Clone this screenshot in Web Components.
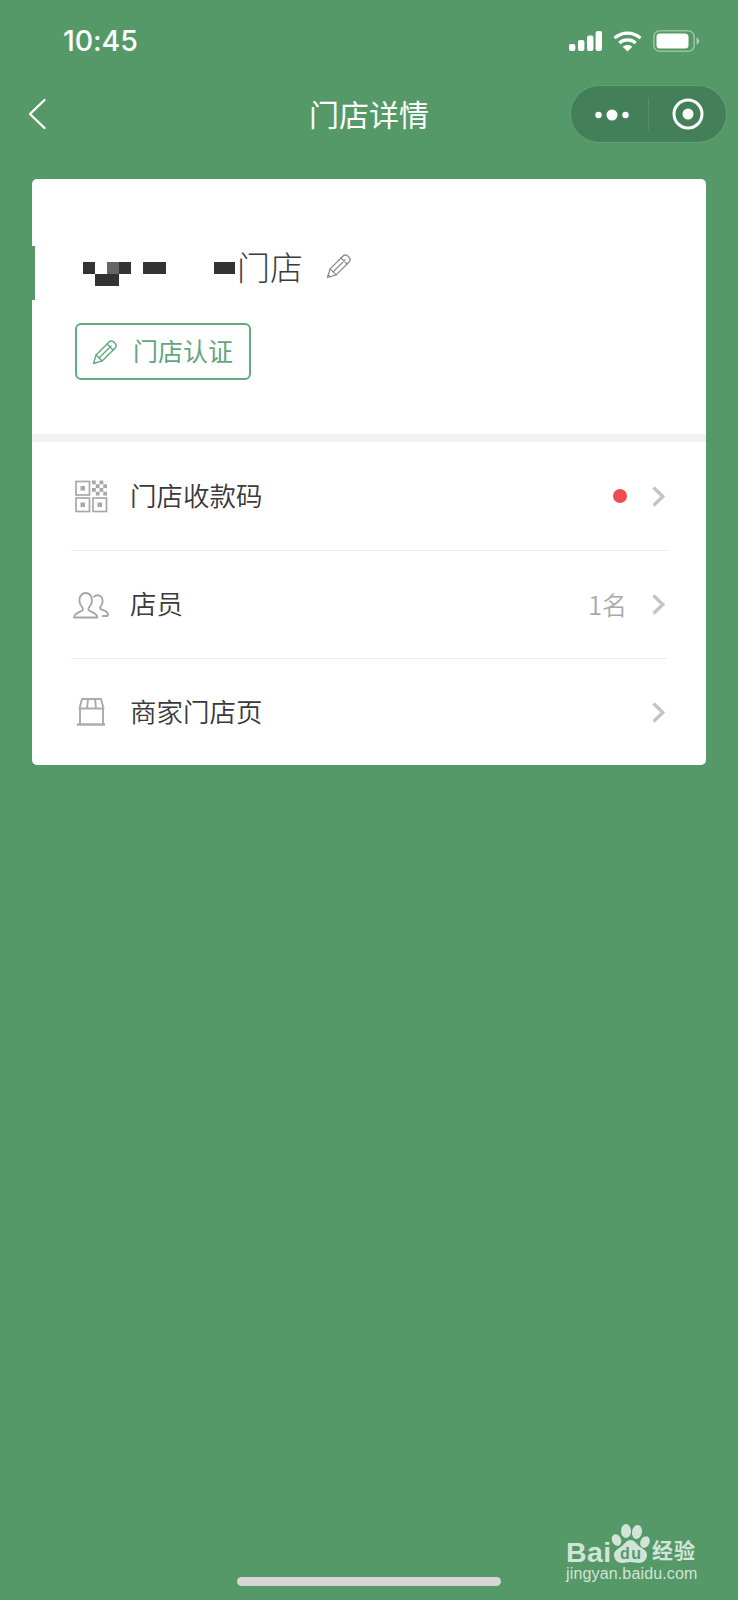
<!DOCTYPE html>
<html lang="zh">
<head>
<meta charset="utf-8">
<title>门店详情</title>
<style>
html,body{margin:0;padding:0;background:#549967;}
body{font-family:"Noto Sans CJK SC","Liberation Sans",sans-serif;}
</style>
</head>
<body>
<x-app>
  <x-status-bar slot="top" time="10:45"></x-status-bar>
  <x-nav-bar slot="top" title="门店详情"></x-nav-bar>
  <x-store-card>
    <x-store-head name="门店" action="门店认证"></x-store-head>
    <x-menu-row first>
      <svg slot="icon" width="40" height="34" viewBox="0 0 40 34" fill="none" stroke="#a8a8a8" stroke-width="1.7">
        <rect x="5" y="2.500" width="13.500" height="13.500"/><rect x="9.500" y="7" width="4.500" height="4.500" fill="#a8a8a8" stroke="none"/>
        <rect x="5" y="19" width="13.500" height="13.500"/><rect x="9.500" y="23.500" width="4.500" height="4.500" fill="#a8a8a8" stroke="none"/>
        <rect x="22" y="19" width="13.500" height="13.500"/><rect x="26.500" y="23.500" width="4.500" height="4.500" fill="#a8a8a8" stroke="none"/>
        <g fill="#a8a8a8" stroke="none"><rect x="21" y="1.500" width="3.800" height="3.800"/><rect x="28.500" y="1.500" width="3.800" height="3.800"/><rect x="24.800" y="5.300" width="3.800" height="3.800"/><rect x="32.200" y="5.300" width="3.800" height="3.800"/><rect x="21" y="9" width="3.800" height="3.800"/><rect x="28.500" y="9" width="3.800" height="3.800"/><rect x="24.800" y="12.800" width="3.800" height="3.800"/><rect x="32.200" y="12.800" width="3.800" height="3.800"/></g>
      </svg>
      门店收款码
      <x-red-dot slot="trail"></x-red-dot>
    </x-menu-row>
    <x-menu-row>
      <svg slot="icon" width="40" height="34" viewBox="0 0 40 34" fill="none" stroke="#a6a6a6" stroke-width="1.900" stroke-linejoin="round" stroke-linecap="round">
        <path d="M3 29.500c0-4.200 5.500-5.200 8.300-7 1-.7.800-2.200-.2-3.300-1.700-1.800-2.700-4.400-2.700-6.900 0-4 2.500-7.300 6.300-7.300s6.300 3.300 6.300 7.300c0 2.500-1 5.100-2.700 6.900-1 1.100-1.200 2.600-.2 3.300 2.800 1.800 8.300 2.800 8.300 7z"/>
        <path d="M23 8.500c1-.9 2.200-1.300 3.500-1.300 3.200 0 5.200 2.500 5.200 5.700 0 2.100-.7 4-2 5.400-.8.900-.8 2.200 0 2.800 2.300 1.400 7.300 2 7.300 5.300 0 .9-.8 1.600-1.800 1.600h-3.500"/>
      </svg>
      店员
      <x-muted-text slot="trail">1名</x-muted-text>
    </x-menu-row>
    <x-menu-row last>
      <svg slot="icon" width="40" height="34" viewBox="0 0 40 34" fill="none" stroke="#acacac" stroke-width="2" stroke-linejoin="round">
        <path d="M11 4h19l2.500 9.500h-24z"/>
        <path d="M17 4l-1 9.500M24 4l1 9.500"/>
        <path d="M9 13.500V29M32 13.500V29"/>
        <path d="M6 29.500h28" stroke-width="2.600"/>
      </svg>
      商家门店页
    </x-menu-row>
  </x-store-card>
  <x-baidu-mark slot="over"></x-baidu-mark>
  <x-home-bar slot="over"></x-home-bar>
</x-app>

<script>
function define(name, css, html, init){
  customElements.define(name, class extends HTMLElement{
    constructor(){
      super();
      const r=this.attachShadow({mode:'open'});
      r.innerHTML='<style>'+css+'</style>'+html;
    }
    connectedCallback(){ if(init) init(this, this.shadowRoot); }
  });
}

define('x-app',
 `:host{display:flex;flex-direction:column;position:relative;width:738px;height:1600px;overflow:hidden;background:#549967;}
  .main{display:block;padding:33px 32px 0;}`,
 `<slot name="top"></slot><div class="main"><slot></slot></div><slot name="over"></slot>`);

define('x-status-bar',
 `:host{display:flex;align-items:center;height:82px;box-sizing:border-box;padding:0 38px 0 63px;color:#fff;}
  .t{font:500 28.500px/1 Inter,"Liberation Sans",sans-serif;letter-spacing:-.1px;}
  .r{margin-left:auto;display:flex;align-items:center;gap:11px;}
  svg{display:block}`,
 `<span class="t"></span>
  <div class="r">
   <svg width="33" height="20" viewBox="0 0 33 20" fill="#fff"><rect x="0" y="13" width="6.400" height="7" rx="2"/><rect x="9" y="9" width="6.400" height="11" rx="2"/><rect x="18" y="4.500" width="6.400" height="15.500" rx="2"/><rect x="26.600" y="0" width="6.400" height="20" rx="2"/></svg>
   <svg width="29" height="21" viewBox="0 0 29 21" fill="none" stroke="#fff" stroke-width="3.200"><path d="M1.500 7.200C8.800.4 20.200.4 27.500 7.200"/><path d="M6.300 12c4.500-4.100 11.900-4.100 16.400 0"/><path d="M14.500 20.500l-4.800-4.800c2.700-2.300 6.900-2.300 9.600 0z" fill="#fff" stroke="none"/></svg>
   <svg width="47" height="22" viewBox="0 0 47 22" fill="none"><rect x=".8" y=".8" width="40.400" height="20.400" rx="6" stroke="#fff" stroke-opacity=".4" stroke-width="1.600"/><rect x="3.500" y="3.500" width="32" height="15" rx="3.500" fill="#fff"/><path d="M43.500 7.500c2 .6 2.800 2 2.800 3.500s-.8 2.900-2.800 3.500z" fill="#fff" fill-opacity=".5"/></svg>
  </div>`,
 (h,r)=>{r.querySelector('.t').textContent=h.getAttribute('time');});

define('x-nav-bar',
 `:host{display:grid;grid-template-columns:1fr auto 1fr;align-items:center;height:64px;box-sizing:border-box;padding:0 12px;color:#fff;}
  .back{display:block;margin-left:16px;}
  .t{font:400 30px/1 "Noto Sans CJK SC",sans-serif;margin-top:-2px;}
  .cap{justify-self:end;display:flex;align-items:center;width:155px;height:56px;border-radius:28px;background:#437f58;box-shadow:0 0 0 1px rgba(255,255,255,.07);}
  .cell{flex:1;display:flex;align-items:center;justify-content:center;height:100%;}
  .more{margin-left:4px;margin-top:1px;}
  .sep{width:1px;height:32px;background:rgba(255,255,255,.12);}
  svg{display:block}`,
 `<svg class="back" width="20" height="32" viewBox="0 0 20 32" fill="none" stroke="#fff" stroke-width="2.400" stroke-linecap="round" stroke-linejoin="round"><path d="M16.500 2L2 16l14.500 14"/></svg>
  <span class="t"></span>
  <div class="cap">
    <div class="cell"><svg class="more" width="36" height="14" viewBox="0 0 36 14" fill="#fff"><circle cx="4.500" cy="7" r="3.200"/><circle cx="18" cy="7" r="5.500"/><circle cx="31.500" cy="7" r="3.200"/></svg></div>
    <div class="sep"></div>
    <div class="cell"><svg width="32" height="32" viewBox="0 0 32 32" fill="none"><circle cx="16" cy="16" r="14" stroke="#fff" stroke-width="3"/><circle cx="16" cy="16" r="5.500" fill="#fff"/></svg></div>
  </div>`,
 (h,r)=>{r.querySelector('.t').textContent=h.getAttribute('title');});

define('x-store-card',
 `:host{display:block;position:relative;background:#fff;border-radius:5px;overflow:hidden;}
  .mark{position:absolute;left:0;top:67px;width:3px;height:54px;background:#549967;}`,
 `<slot></slot><div class="mark"></div>`);

define('x-store-head',
 `:host{display:block;box-sizing:border-box;height:263px;padding:63px 0 0 0;border-bottom:8px solid #f2f2f2;color:#3a3a3a;}
  .name{display:flex;align-items:center;height:48px;padding-left:51px;font:300 33px/48px "Noto Sans CJK SC",sans-serif;}
  .txt{margin-left:1px;}
  .pen{margin-left:23px;display:block;}
  .mosaic{display:block;margin-top:15px}
  .btn{display:inline-flex;align-items:center;box-sizing:border-box;margin:33px 0 0 43px;width:176px;height:57px;border:2px solid #62aa80;border-radius:6px;padding-left:15px;color:#62a67e;font:400 25px/1 "Noto Sans CJK SC",sans-serif;}
  .btn svg{display:block;margin-right:15px;}
  .act{margin-top:-2px;}`,
 `<div class="name">
    <svg class="mosaic" width="153" height="24" viewBox="0 0 153 24"><rect x="0" y="0" width="12" height="12" fill="#333"/><rect x="12" y="12" width="24" height="12" fill="#333"/><rect x="24" y="0" width="12" height="12" fill="#666"/><rect x="36" y="0" width="12" height="12" fill="#333"/><rect x="60" y="0" width="23" height="12" fill="#333"/><rect x="131" y="0" width="21" height="12" fill="#333"/></svg>
    <span class="txt"></span>
    <svg class="pen" width="26" height="26" viewBox="0 0 26 26" fill="none" stroke="#8c8c8c" stroke-width="1.300" stroke-linejoin="round" stroke-linecap="round"><path d="M1.500 24.500l2.600-8.600L16.800 3.200c1.300-1.300 3.400-1.500 5-.1l1.200 1.200c1.400 1.500 1.200 3.600-.1 4.900L10.100 21.900z"/><path d="M4.100 15.900l6 6M15 5l6 6M7.500 18.500L19 7M2.200 22l1.800 1.800"/></svg>
  </div>
  <div class="btn">
    <svg width="26" height="26" viewBox="0 0 26 26" fill="none" stroke="#62a67e" stroke-width="1.400" stroke-linejoin="round" stroke-linecap="round"><path d="M1.500 24.500l2.600-8.600L16.800 3.200c1.300-1.300 3.400-1.500 5-.1l1.200 1.200c1.400 1.500 1.200 3.600-.1 4.900L10.100 21.900z"/><path d="M4.100 15.900l6 6M15 5l6 6M7.500 18.500L19 7"/></svg>
    <span class="act"></span>
  </div>`,
 (h,r)=>{r.querySelector('.txt').textContent=h.getAttribute('name');r.querySelector('.act').textContent=h.getAttribute('action');});

define('x-menu-row',
 `:host{display:block;padding:0 39px;}
  .row{display:flex;align-items:center;height:108px;box-sizing:border-box;border-bottom:1px solid #e9e9e9;font:350 26.500px/1 "Noto Sans CJK SC",sans-serif;color:#3a3a3a;padding:0 2px 0 0;}
  :host([first]) .row{height:109px;}
  :host([last]) .row{border-bottom:0;height:106px;}
  .ic{display:flex;width:40px;margin-right:19px;}
  .txt{flex:1;margin-top:-2px;}
  .trail{display:flex;align-items:center;margin-right:25px;}
  svg{display:block}`,
 `<div class="row">
    <div class="ic"><slot name="icon"></slot></div>
    <div class="txt"><slot></slot></div>
    <div class="trail"><slot name="trail"></slot></div>
    <svg width="13" height="21" viewBox="0 0 13 21" fill="none" stroke="#c4c4c4" stroke-width="3.300"><path d="M1.500 1.500L10.800 10.500 1.500 19.500"/></svg>
  </div>`);

define('x-red-dot',
 `:host{display:block;width:14px;height:14px;border-radius:50%;background:#f24c4c;}`,``);

define('x-muted-text',
 `:host{display:block;color:#a9a9a9;font:350 25px/1 "Noto Sans CJK SC",sans-serif;}`,`<slot></slot>`);

define('x-baidu-mark',
 `:host{position:absolute;left:566px;top:1525px;width:140px;height:62px;color:#d2e3d8;}
  .bai{position:absolute;left:0;top:14px;font:700 28.500px/26px "Liberation Sans",sans-serif;letter-spacing:.4px;}
  svg{position:absolute;left:45px;top:-3px;display:block;}
  .du{position:absolute;left:54px;top:21px;font:700 16px/1 "Liberation Sans",sans-serif;color:#549967;letter-spacing:1.500px;}
  .jy{position:absolute;left:86px;top:14px;font:700 21px/1 "Noto Sans CJK SC",sans-serif;letter-spacing:1px;}
  .url{position:absolute;left:0;top:41px;font:400 16px/1 "Liberation Sans",sans-serif;letter-spacing:.15px;white-space:nowrap;}`,
 `<span class="bai">Bai</span>
  <svg width="40" height="42" viewBox="0 0 40 42" fill="#d2e3d8"><ellipse cx="15" cy="9" rx="5" ry="7"/><ellipse cx="26" cy="10" rx="5" ry="7" transform="rotate(10 26 10)"/><ellipse cx="5.500" cy="18" rx="4.500" ry="6" transform="rotate(-25 5.500 18)"/><ellipse cx="34" cy="20" rx="4.500" ry="6" transform="rotate(25 34 20)"/><path d="M19.500 18C23 18 25 21 28 24C32 27 36 28.500 36 33C36 38 32 41 28 41C25 41 22 40 19.500 40C17 40 14 41 11 41C7 41 3 38 3 33C3 28.500 7 27 11 24C14 21 16 18 19.500 18Z"/></svg>
  <span class="du">du</span>
  <span class="jy">经验</span>
  <span class="url">jingyan.baidu.com</span>`);

define('x-home-bar',
 `:host{position:absolute;left:237px;top:1577px;width:264px;height:9px;border-radius:5px;background:#d6d6d6;}`,``);
</script>
</body>
</html>
